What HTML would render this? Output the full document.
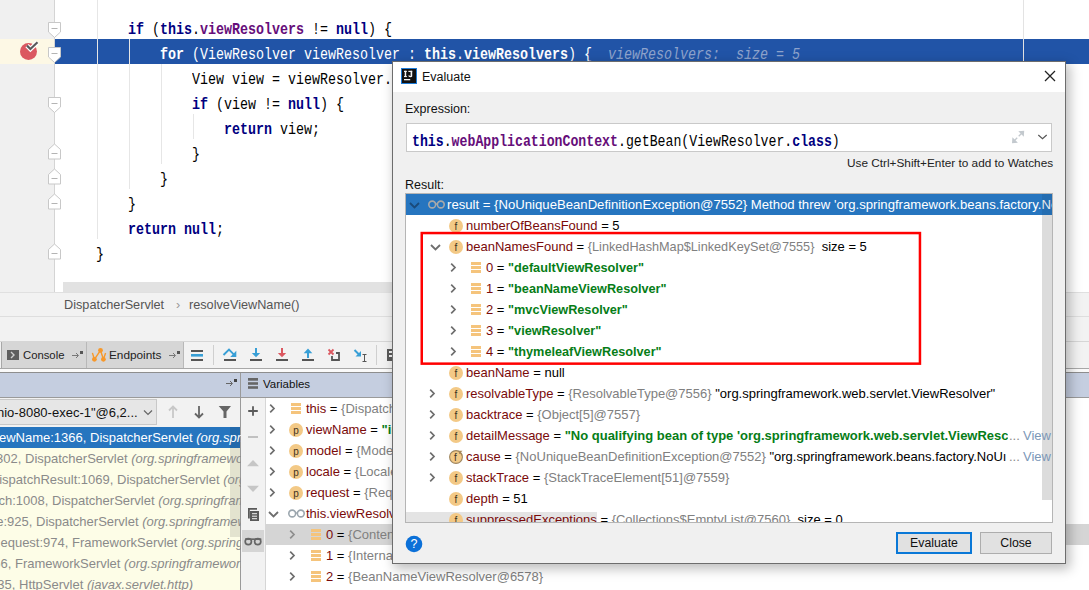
<!DOCTYPE html>
<html><head><meta charset="utf-8">
<style>
*{margin:0;padding:0;box-sizing:border-box}
html,body{width:1089px;height:590px;overflow:hidden;background:#fff;position:relative;font-family:"Liberation Sans",sans-serif}
.a{position:absolute}
.code{font-family:"Liberation Mono",monospace;font-size:16px;transform:scaleX(0.8333);transform-origin:0 0;white-space:pre;position:absolute;line-height:25px;height:25px;color:#000}
.kw{color:#000080;font-weight:bold}
.fld{color:#660e7a;font-weight:bold}
.ui{font-size:13px;white-space:pre;position:absolute;line-height:21px}
.row{position:absolute;height:21px;line-height:21px;white-space:pre;font-size:13px}
.nm{color:#7a0a0a}
.gr{color:#808080}
.str{color:#067d17;font-weight:bold}
.pre{position:absolute;right:100%;top:0}
</style></head><body>

<!-- ============ EDITOR ============ -->
<div class="a" style="left:0;top:0;width:54px;height:292px;background:#f0f0f0"></div>
<div class="a" style="left:54px;top:0;width:1px;height:292px;background:#d4d4d4"></div>
<!-- breakpoint line gutter -->
<div class="a" style="left:0;top:39px;width:54px;height:25px;background:#fdf8e5"></div>
<!-- exec line -->
<div class="a" style="left:55px;top:39px;width:1034px;height:25px;background:#2154a7"></div>
<!-- indent guides -->
<div class="a" style="left:97px;top:0;width:1px;height:239px;background:#e6e6e6"></div>
<div class="a" style="left:129px;top:39px;width:1px;height:150px;background:#e6e6e6"></div>
<div class="a" style="left:161px;top:64px;width:1px;height:100px;background:#e6e6e6"></div>
<div class="a" style="left:193px;top:114px;width:1px;height:25px;background:#e6e6e6"></div>
<!-- right margin -->
<div class="a" style="left:1023px;top:0;width:1px;height:282px;background:#e3e3e3"></div>

<!-- breakpoint icon -->
<svg class="a" style="left:18px;top:41px;overflow:visible" width="24" height="22" viewBox="0 0 24 22">
  <circle cx="10.5" cy="10.5" r="8.5" fill="#db5860"/>
  <path d="M9 4.6 L12.4 8 L19.5 1.3" fill="none" stroke="#fff" stroke-width="4.5"/>
  <path d="M9 4.6 L12.4 8 L19.5 1.3" fill="none" stroke="#59595b" stroke-width="2.2"/>
</svg>

<!-- fold markers -->
<svg class="a" style="left:47px;top:0" width="16" height="292" viewBox="0 0 16 292">
  <g fill="#fff" stroke="#c8c8c8" stroke-width="1">
    <path d="M1.5 22.5 H13.5 V32 L7.5 37.5 L1.5 32 Z"/>
    <path d="M1.5 47.5 H13.5 V57 L7.5 62.5 L1.5 57 Z"/>
    <path d="M1.5 97.5 H13.5 V107 L7.5 112.5 L1.5 107 Z"/>
    <path d="M7.5 144 L13.5 149.5 V159 H1.5 V149.5 Z"/>
    <path d="M7.5 169 L13.5 174.5 V184 H1.5 V174.5 Z"/>
    <path d="M7.5 194 L13.5 199.5 V209 H1.5 V199.5 Z"/>
    <path d="M7.5 244 L13.5 249.5 V259 H1.5 V249.5 Z"/>
  </g>
  <g stroke="#b4b4b4" stroke-width="1">
    <path d="M4.5 28.5 H10.5 M4.5 53.5 H10.5 M4.5 103.5 H10.5 M4.5 153.5 H10.5 M4.5 178.5 H10.5 M4.5 203.5 H10.5 M4.5 253.5 H10.5"/>
  </g>
</svg>

<!-- code -->
<div class="code" style="left:128px;top:18px"><span class="kw">if</span> (<span class="kw">this</span>.<span class="fld">viewResolvers</span> != <span class="kw">null</span>) {</div>
<div class="code" style="left:160px;top:43px;color:#fff"><b>for</b> (ViewResolver viewResolver : <b>this</b>.<b>viewResolvers</b>) {  <i style="color:#8ea3cc">viewResolvers:  size = 5</i></div>
<div class="code" style="left:192px;top:68px">View view = viewResolver.resolveViewName(viewName, locale);</div>
<div class="code" style="left:192px;top:93px"><span class="kw">if</span> (view != <span class="kw">null</span>) {</div>
<div class="code" style="left:224px;top:118px"><span class="kw">return</span> view;</div>
<div class="code" style="left:192px;top:143px">}</div>
<div class="code" style="left:160px;top:168px">}</div>
<div class="code" style="left:128px;top:193px">}</div>
<div class="code" style="left:128px;top:218px"><span class="kw">return null</span>;</div>
<div class="code" style="left:96px;top:243px">}</div>

<!-- horizontal scrollbar -->
<div class="a" style="left:63px;top:282px;width:990px;height:10px;background:#e2e2e2"></div>

<!-- ============ BREADCRUMB ============ -->
<div class="a" style="left:0;top:292px;width:1089px;height:50px;background:#f2f2f2"></div>
<div class="a" style="left:0;top:292px;width:1089px;height:1px;background:#e0e0e0"></div>
<div class="a" style="left:0;top:316px;width:1089px;height:1px;background:#dedede"></div>
<div class="ui" style="left:64px;top:295px;font-size:12.7px;color:#555">DispatcherServlet</div>
<div class="ui" style="left:176px;top:295px;font-size:12.7px;color:#999">›</div>
<div class="ui" style="left:189px;top:295px;font-size:12.7px;color:#555">resolveViewName()</div>

<!-- ============ DEBUG TOOLBAR ============ -->
<div class="a" style="left:0;top:341px;width:1089px;height:27px;background:#f2f2f2"></div>
<div class="a" style="left:0;top:341px;width:1089px;height:1px;background:#d6d6d6"></div>
<div class="a" style="left:1px;top:342px;width:86px;height:26px;background:#d6d6d6;border-left:1px solid #a8a8a8;border-right:1px solid #b8b8b8"></div>
<div class="a" style="left:87px;top:342px;width:97px;height:26px;background:#d6d6d6;border-right:1px solid #b8b8b8"></div>
<div class="a" style="left:0;top:368px;width:1089px;height:1px;background:#a8a8a8"></div>
<div class="a" style="left:0;top:369px;width:1089px;height:3px;background:#fafafa"></div>
<div class="a" style="left:0;top:372px;width:1089px;height:1px;background:#8e8e8e"></div>
<!-- console icon -->
<svg class="a" style="left:7px;top:350px" width="12" height="10"><rect width="12" height="10" fill="#5e5e5e"/><path d="M4 2 L7 5 L4 8" stroke="#d0d0d0" stroke-width="1.4" fill="none"/></svg>
<div class="ui" style="left:23px;top:345px;font-size:11.3px;color:#222">Console</div>
<svg class="a" style="left:72px;top:349px" width="12" height="10"><path d="M0 6.5 H6 M4 4 L6.5 6.5 L4 9" stroke="#777" stroke-width="1" fill="none"/><rect x="8" y="2" width="3" height="3" fill="#555"/></svg>
<!-- endpoints icon -->
<svg class="a" style="left:90px;top:346px" width="18" height="17" viewBox="90 346 18 17"><path d="M92.4 352.9 L94.4 359.3 L100.5 350.3 L103.4 359.3 L105.6 352.9" stroke="#f7982a" stroke-width="1.4" fill="none"/><circle cx="94.4" cy="359.3" r="2.4" fill="#f7982a"/><circle cx="100.5" cy="350.3" r="2.4" fill="#f7982a"/><circle cx="103.4" cy="359.3" r="2.4" fill="#f7982a"/></svg>
<div class="ui" style="left:109px;top:345px;font-size:11.8px;color:#222">Endpoints</div>
<svg class="a" style="left:169px;top:349px" width="12" height="10"><path d="M0 6.5 H6 M4 4 L6.5 6.5 L4 9" stroke="#777" stroke-width="1" fill="none"/><rect x="8" y="2" width="3" height="3" fill="#555"/></svg>
<!-- toolbar buttons -->
<svg class="a" style="left:0;top:341px" width="392" height="27" viewBox="0 341 392 27">
  <rect x="191" y="350" width="12" height="2" fill="#555"/><rect x="191" y="354" width="12" height="2.6" fill="#389fd6"/><rect x="191" y="359" width="12" height="2" fill="#555"/>
  <rect x="213" y="345" width="1" height="20" fill="#cfcfcf"/>
  <path d="M223.5 355 L229 349.6 L234 354.6" stroke="#389fd6" stroke-width="1.9" fill="none"/><path d="M236.3 350.8 V357 H230.2 Z" fill="#389fd6"/><rect x="224" y="359" width="12" height="2" fill="#555"/>
  <rect x="255" y="348" width="2" height="6" fill="#389fd6"/><path d="M251.8 353 H260.2 L256 357.3 Z" fill="#389fd6"/><rect x="250" y="359" width="12" height="2" fill="#555"/>
  <rect x="281" y="348" width="2" height="6" fill="#db5860"/><path d="M277.8 353 H286.2 L282 357.3 Z" fill="#db5860"/><rect x="276" y="359" width="12" height="2" fill="#555"/>
  <rect x="307" y="352" width="2" height="6" fill="#389fd6"/><path d="M303.7 353.2 H312.3 L308 348.6 Z" fill="#389fd6"/><rect x="302" y="359" width="12" height="2" fill="#555"/>
  <path d="M328.5 349.5 L333.5 354.5 M333.5 349.5 L328.5 354.5" stroke="#db5860" stroke-width="1.8"/>
  <path d="M336 353 H339 V360 H332 V356" stroke="#555" stroke-width="1.8" fill="none"/>
  <path d="M354.5 350 L359.5 355" stroke="#389fd6" stroke-width="1.9"/><path d="M361 351 V356.5 H355.5 Z" fill="#389fd6"/>
  <path d="M364.5 354.5 V361.5 M362.5 354.5 H366.5 M362.5 361.5 H366.5" stroke="#555" stroke-width="1"/>
  <rect x="376" y="345" width="1" height="20" fill="#cfcfcf"/>
  <rect x="387" y="349" width="6" height="12" fill="#5a5a5a"/><rect x="389" y="351" width="4" height="2" fill="#f2f2f2"/><rect x="389" y="355" width="4" height="2" fill="#f2f2f2"/>
</svg>

<!-- ============ HEADER ROW ============ -->
<div class="a" style="left:0;top:373px;width:1089px;height:24px;background:#c5cee0"></div>
<div class="a" style="left:0;top:397px;width:1089px;height:1px;background:#9a9a9a"></div>
<div class="a" style="left:240px;top:373px;width:1px;height:217px;background:#9a9a9a"></div>
<svg class="a" style="left:226px;top:377px" width="12" height="10"><path d="M0 6.5 H6 M4 4 L6.5 6.5 L4 9" stroke="#666" stroke-width="1" fill="none"/><rect x="8" y="2" width="3" height="3" fill="#444"/></svg>
<svg class="a" style="left:248px;top:378px" width="10" height="11"><rect x="0" y="0" width="10" height="2.7" fill="#666"/><rect x="0" y="4.2" width="10" height="2.6" fill="#666"/><rect x="0" y="8.2" width="10" height="2.6" fill="#666"/></svg>
<div class="ui" style="left:263px;top:374px;font-size:11.5px;color:#111">Variables</div>

<!-- ============ FRAMES PANEL ============ -->
<div class="a" style="left:0;top:398px;width:240px;height:29px;background:#f2f2f2"></div>
<div class="a" style="left:-2px;top:399px;width:159px;height:26px;background:#e6e6e6;border:1px solid #c8c8c8"></div>
<div class="ui" style="left:-3px;top:402px;font-size:13px;color:#111">nio-8080-exec-1"@6,2...</div>
<svg class="a" style="left:143px;top:409px" width="10" height="8"><path d="M1 1.5 L5 5.5 L9 1.5" stroke="#666" stroke-width="1.2" fill="none"/></svg>
<svg class="a" style="left:168px;top:402px" width="70" height="20" viewBox="0 0 70 20">
  <path d="M5 16 V4.5 M1 8.5 L5 4.5 L9 8.5" stroke="#c8c8c8" stroke-width="1.8" fill="none"/>
  <path d="M31 4 V15.5 M27 11.5 L31 15.5 L35 11.5" stroke="#666" stroke-width="1.8" fill="none"/>
  <path d="M50.7 4 H63 L58.5 9.5 V16 H55.5 V9.5 Z" fill="#666"/>
</svg>
<div class="a" style="left:0;top:427px;width:240px;height:163px;background:#fdfde7"></div>
<div class="a" style="left:0;top:427px;width:240px;height:21px;background:#2675bf"></div>
<div class="a" style="left:230px;top:427px;width:10px;height:110px;background:rgba(0,0,0,0.1)"></div>
<div class="row" style="left:90px;top:427px;color:#fff"><span class="pre">resolveViewName:1366, </span>DispatcherServlet <i>(org.springframework.web.servlet)</i></div>
<div class="row" style="left:25px;top:448px;color:#8a8a8a"><span class="pre">render:1302, </span>DispatcherServlet <i>(org.springframework.web.servlet)</i></div>
<div class="row" style="left:117px;top:469px;color:#8a8a8a"><span class="pre">processDispatchResult:1069, </span>DispatcherServlet <i>(org.springframework.web.servlet)</i></div>
<div class="row" style="left:52px;top:490px;color:#8a8a8a"><span class="pre">doDispatch:1008, </span>DispatcherServlet <i>(org.springframework.web.servlet)</i></div>
<div class="row" style="left:36px;top:511px;color:#8a8a8a"><span class="pre">doService:925, </span>DispatcherServlet <i>(org.springframework.web.servlet)</i></div>
<div class="row" style="left:72px;top:532px;color:#8a8a8a"><span class="pre">processRequest:974, </span>FrameworkServlet <i>(org.springframework.web.servlet)</i></div>
<div class="row" style="left:15px;top:553px;color:#8a8a8a"><span class="pre">doGet:866, </span>FrameworkServlet <i>(org.springframework.web.servlet)</i></div>
<div class="row" style="left:19px;top:574px;color:#8a8a8a"><span class="pre">service:635, </span>HttpServlet <i>(javax.servlet.http)</i></div>
<div class="a" style="left:230px;top:427px;width:10px;height:163px;background:transparent"></div>

<!-- ============ VARIABLES PANEL ============ -->
<div class="a" style="left:241px;top:398px;width:24px;height:192px;background:#f2f2f2"></div>
<div class="a" style="left:265px;top:398px;width:1px;height:192px;background:#d6d6d6"></div>
<div class="a" style="left:266px;top:398px;width:823px;height:192px;background:#fff"></div>
<svg class="a" style="left:241px;top:398px" width="24" height="192" viewBox="0 0 24 192">
  <path d="M12 8.3 V17.8 M7.2 13 H16.8" stroke="#5a5a5a" stroke-width="1.8"/>
  <path d="M7 39 H17" stroke="#bbb" stroke-width="1.8"/>
  <path d="M6 68.2 H18 L12 62 Z" fill="#c6c6c6"/>
  <path d="M6 87.8 H18 L12 94 Z" fill="#c6c6c6"/>
  <path d="M7.9 120.5 V110.9 H16" stroke="#5a5a5a" stroke-width="1.8" fill="none"/>
  <rect x="9" y="113" width="9" height="10" fill="#5a5a5a"/><path d="M11 115.7 H16 M11 118.2 H16 M11 120.7 H16" stroke="#f2f2f2" stroke-width="1"/>
  <rect x="1" y="132" width="22" height="22" fill="#d5d5d5"/>
  <g fill="none" stroke="#666" stroke-width="1.7"><circle cx="7.3" cy="143.6" r="3.1"/><circle cx="16.7" cy="143.6" r="3.1"/><path d="M4 141.2 H20.3"/></g>
</svg>
<div class="a" style="left:266px;top:524px;width:823px;height:21px;background:#d5d5d5"></div>
<svg class="a" style="left:269px;top:403px" width="8" height="11"><path d="M1.2 1.6 L5 5.5 L1.2 9.4" stroke="#6e6e6e" stroke-width="1.7" fill="none"/></svg>
<svg class="a" style="left:291px;top:403px" width="10" height="11"><rect y="0" width="10" height="3" fill="#f5c47c"/><rect y="4" width="10" height="3" fill="#f5c47c"/><rect y="8" width="10" height="3" fill="#f5c47c"/></svg>
<div class="row" style="left:306px;top:398px"><span class="nm">this</span> = <span class="gr">{DispatcherServlet@6420}</span></div>
<svg class="a" style="left:269px;top:424px" width="8" height="11"><path d="M1.2 1.6 L5 5.5 L1.2 9.4" stroke="#6e6e6e" stroke-width="1.7" fill="none"/></svg>
<svg class="a" style="left:289px;top:423px" width="14" height="14"><circle cx="7" cy="7" r="7" fill="#f3c986"/><text x="7" y="11" font-family="Liberation Sans" font-size="10" text-anchor="middle" fill="#3d3321">p</text></svg>
<div class="row" style="left:306px;top:419px"><span class="nm">viewName</span> = <span class="str">"index"</span></div>
<svg class="a" style="left:269px;top:445px" width="8" height="11"><path d="M1.2 1.6 L5 5.5 L1.2 9.4" stroke="#6e6e6e" stroke-width="1.7" fill="none"/></svg>
<svg class="a" style="left:289px;top:444px" width="14" height="14"><circle cx="7" cy="7" r="7" fill="#f3c986"/><text x="7" y="11" font-family="Liberation Sans" font-size="10" text-anchor="middle" fill="#3d3321">p</text></svg>
<div class="row" style="left:306px;top:440px"><span class="nm">model</span> = <span class="gr">{ModelMap@6421}</span></div>
<svg class="a" style="left:269px;top:466px" width="8" height="11"><path d="M1.2 1.6 L5 5.5 L1.2 9.4" stroke="#6e6e6e" stroke-width="1.7" fill="none"/></svg>
<svg class="a" style="left:289px;top:465px" width="14" height="14"><circle cx="7" cy="7" r="7" fill="#f3c986"/><text x="7" y="11" font-family="Liberation Sans" font-size="10" text-anchor="middle" fill="#3d3321">p</text></svg>
<div class="row" style="left:306px;top:461px"><span class="nm">locale</span> = <span class="gr">{Locale@6422}</span></div>
<svg class="a" style="left:269px;top:487px" width="8" height="11"><path d="M1.2 1.6 L5 5.5 L1.2 9.4" stroke="#6e6e6e" stroke-width="1.7" fill="none"/></svg>
<svg class="a" style="left:289px;top:486px" width="14" height="14"><circle cx="7" cy="7" r="7" fill="#f3c986"/><text x="7" y="11" font-family="Liberation Sans" font-size="10" text-anchor="middle" fill="#3d3321">p</text></svg>
<div class="row" style="left:306px;top:482px"><span class="nm">request</span> = <span class="gr">{RequestFacade@6423}</span></div>
<svg class="a" style="left:268px;top:511px" width="11" height="7"><path d="M1 1 L5.5 5.5 L10 1" stroke="#6e6e6e" stroke-width="1.8" fill="none"/></svg>
<svg class="a" style="left:288px;top:509px" width="17" height="9"><circle cx="4.2" cy="4.5" r="3.4" fill="none" stroke="#9ba6ae" stroke-width="1.6"/><circle cx="12.8" cy="4.5" r="3.4" fill="none" stroke="#9ba6ae" stroke-width="1.6"/><path d="M7.6 4 H9.4" stroke="#9ba6ae" stroke-width="1.4"/></svg>
<div class="row" style="left:306px;top:503px"><span class="nm">this.viewResolvers</span> = <span class="gr">{ArrayList@6424}</span></div>
<svg class="a" style="left:289px;top:529px" width="8" height="11"><path d="M1.2 1.6 L5 5.5 L1.2 9.4" stroke="#8e8e8e" stroke-width="1.7" fill="none"/></svg>
<svg class="a" style="left:311px;top:529px" width="10" height="11"><rect y="0" width="10" height="3" fill="#f5c47c"/><rect y="4" width="10" height="3" fill="#f5c47c"/><rect y="8" width="10" height="3" fill="#f5c47c"/></svg>
<div class="row" style="left:326px;top:524px"><span class="nm">0</span> = <span class="gr">{ContentNegotiatingViewResolver@6576}</span></div>
<svg class="a" style="left:289px;top:550px" width="8" height="11"><path d="M1.2 1.6 L5 5.5 L1.2 9.4" stroke="#6e6e6e" stroke-width="1.7" fill="none"/></svg>
<svg class="a" style="left:311px;top:550px" width="10" height="11"><rect y="0" width="10" height="3" fill="#f5c47c"/><rect y="4" width="10" height="3" fill="#f5c47c"/><rect y="8" width="10" height="3" fill="#f5c47c"/></svg>
<div class="row" style="left:326px;top:545px"><span class="nm">1</span> = <span class="gr">{InternalResourceViewResolver@6577}</span></div>
<svg class="a" style="left:289px;top:571px" width="8" height="11"><path d="M1.2 1.6 L5 5.5 L1.2 9.4" stroke="#6e6e6e" stroke-width="1.7" fill="none"/></svg>
<svg class="a" style="left:311px;top:571px" width="10" height="11"><rect y="0" width="10" height="3" fill="#f5c47c"/><rect y="4" width="10" height="3" fill="#f5c47c"/><rect y="8" width="10" height="3" fill="#f5c47c"/></svg>
<div class="row" style="left:326px;top:566px"><span class="nm">2</span> = <span class="gr">{BeanNameViewResolver@6578}</span></div>


<!-- ============ EVALUATE DIALOG ============ -->
<div class="a" style="left:392px;top:61px;width:674px;height:503px;box-shadow:3px 4px 11px 1px rgba(0,0,0,0.26)"></div>
<div class="a" style="left:392px;top:61px;width:674px;height:503px;background:#f0f0f0;border:1px solid #6d6d6d"></div>
<div class="a" style="left:393px;top:62px;width:672px;height:30px;background:#fff"></div>
<svg class="a" style="left:401px;top:68px" width="16" height="16"><rect x="0" y="0" width="16" height="16" fill="#1e7bd6"/><rect x="1" y="1" width="14" height="14" fill="#111"/><g fill="#f4f4f4"><rect x="3" y="2.8" width="2.8" height="1.2"/><rect x="3.7" y="2.8" width="1.5" height="6.2"/><rect x="3" y="8" width="2.8" height="1.1"/><rect x="7.4" y="2.8" width="3.8" height="1.2"/><rect x="9.6" y="2.8" width="1.6" height="5.6"/><path d="M7.2 7.6 H8.7 Q8.8 8.1 9.6 8 L11.2 8 Q11 9.2 9.4 9.2 Q7.4 9.2 7.2 7.6 Z"/><rect x="3" y="11" width="6.2" height="1.3"/></g></svg>
<div class="ui" style="left:422px;top:67px;font-size:12.5px;color:#111">Evaluate</div>
<svg class="a" style="left:1044px;top:70px" width="12" height="12"><path d="M1 1 L11 11 M11 1 L1 11" stroke="#222" stroke-width="1.25"/></svg>

<div class="ui" style="left:405px;top:99px;font-size:12.5px;color:#111">Expression:</div>
<div class="a" style="left:406px;top:123px;width:646px;height:29px;background:#fff;border:1px solid #c9c9c9"></div>
<div class="code" style="left:412px;top:130px;font-size:16px;transform:scaleX(0.825)"><span class="kw">this</span>.<span class="fld">webApplicationContext</span>.getBean(ViewResolver.<span class="kw">class</span>)</div>
<svg class="a" style="left:1010px;top:130px" width="16" height="15" viewBox="1010 130 16 15"><path d="M1024.2 130.8 L1018.3 131.2 L1023.8 136.7 Z M1012 143.2 L1012.4 137.3 L1017.9 142.8 Z" fill="#c3c9ce"/><path d="M1021.5 133.5 L1018.7 136.3 M1014.5 140.5 L1017.2 137.8" stroke="#c3c9ce" stroke-width="1.3"/></svg>
<svg class="a" style="left:1037px;top:134px" width="11" height="7"><path d="M1.3 1 L5.5 4.6 L9.7 1" stroke="#555" stroke-width="1.2" fill="none"/></svg>
<div class="ui" style="left:847px;top:153px;font-size:11.8px;color:#222">Use Ctrl+Shift+Enter to add to Watches</div>

<div class="ui" style="left:405px;top:175px;font-size:12.5px;color:#111">Result:</div>
<div class="a" style="left:405px;top:193px;width:648px;height:330px;background:#fff;border:1px solid #b5b5b5;overflow:hidden" id="tree">
<div class="a" style="left:636px;top:21px;width:10px;height:285px;background:#dcdcdc"></div>
<div class="a" style="left:0;top:0;width:646px;height:21px;background:#2675bf"></div>
<svg class="a" style="left:3px;top:8px" width="11" height="7"><path d="M1 1 L5.5 5.5 L10 1" stroke="#1a4a7a" stroke-width="1.8" fill="none"/></svg>
<svg class="a" style="left:22px;top:6px" width="17" height="9"><circle cx="4.2" cy="4.5" r="3.4" fill="none" stroke="#a9a9a9" stroke-width="1.6"/><circle cx="12.8" cy="4.5" r="3.4" fill="none" stroke="#a9a9a9" stroke-width="1.6"/><path d="M7.6 4 H9.4" stroke="#a9a9a9" stroke-width="1.4"/></svg>
<div class="row" style="left:41px;top:0;color:#fff;font-size:13.15px">result = {NoUniqueBeanDefinitionException@7552} Method threw 'org.springframework.beans.factory.NoUniqueBeanDefinitionException' exception.</div>
<div class="a" style="left:636px;top:0;width:10px;height:21px;background:rgba(20,40,60,0.10)"></div>
<div class="a" style="left:0;top:318px;width:191px;height:18px;background:#e4e4e4"></div>
<svg class="a" style="left:43px;top:25px" width="14" height="14"><circle cx="7" cy="7" r="7" fill="#f3c986"/><text x="7" y="11" font-family="Liberation Sans" font-size="10" text-anchor="middle" fill="#3d3321">f</text></svg>
<div class="row" style="left:60px;top:21px"><span class="nm">numberOfBeansFound</span> = 5</div>
<svg class="a" style="left:24px;top:50px" width="11" height="7"><path d="M1 1 L5.5 5.5 L10 1" stroke="#6e6e6e" stroke-width="1.8" fill="none"/></svg>
<svg class="a" style="left:43px;top:46px" width="14" height="14"><circle cx="7" cy="7" r="7" fill="#f3c986"/><text x="7" y="11" font-family="Liberation Sans" font-size="10" text-anchor="middle" fill="#3d3321">f</text></svg>
<div class="row" style="left:60px;top:42px"><span class="nm">beanNamesFound</span> = <span class="gr" style="font-size:12.7px">{LinkedHashMap$LinkedKeySet@7555}</span>  size = 5</div>
<svg class="a" style="left:43px;top:172px" width="14" height="14"><circle cx="7" cy="7" r="7" fill="#f3c986"/><text x="7" y="11" font-family="Liberation Sans" font-size="10" text-anchor="middle" fill="#3d3321">f</text></svg>
<div class="row" style="left:60px;top:168px"><span class="nm">beanName</span> = null</div>
<svg class="a" style="left:23px;top:194px" width="8" height="11"><path d="M1.2 1.6 L5 5.5 L1.2 9.4" stroke="#6e6e6e" stroke-width="1.7" fill="none"/></svg>
<svg class="a" style="left:43px;top:193px" width="14" height="14"><circle cx="7" cy="7" r="7" fill="#f3c986"/><text x="7" y="11" font-family="Liberation Sans" font-size="10" text-anchor="middle" fill="#3d3321">f</text></svg>
<div class="row" style="left:60px;top:189px"><span class="nm">resolvableType</span> = <span class="gr">{ResolvableType@7556}</span> "org.springframework.web.servlet.ViewResolver"</div>
<svg class="a" style="left:23px;top:215px" width="8" height="11"><path d="M1.2 1.6 L5 5.5 L1.2 9.4" stroke="#6e6e6e" stroke-width="1.7" fill="none"/></svg>
<svg class="a" style="left:43px;top:214px" width="14" height="14"><circle cx="7" cy="7" r="7" fill="#f3c986"/><text x="7" y="11" font-family="Liberation Sans" font-size="10" text-anchor="middle" fill="#3d3321">f</text></svg>
<div class="row" style="left:60px;top:210px"><span class="nm">backtrace</span> = <span class="gr">{Object[5]@7557}</span></div>
<svg class="a" style="left:23px;top:236px" width="8" height="11"><path d="M1.2 1.6 L5 5.5 L1.2 9.4" stroke="#6e6e6e" stroke-width="1.7" fill="none"/></svg>
<svg class="a" style="left:43px;top:235px" width="14" height="14"><circle cx="7" cy="7" r="7" fill="#f3c986"/><text x="7" y="11" font-family="Liberation Sans" font-size="10" text-anchor="middle" fill="#3d3321">f</text></svg>
<div class="row" style="left:60px;top:231px"><span class="nm">detailMessage</span> = <span class="str">"No qualifying bean of type 'org.springframework.web.servlet.ViewResc</span></div>
<svg class="a" style="left:23px;top:257px" width="8" height="11"><path d="M1.2 1.6 L5 5.5 L1.2 9.4" stroke="#6e6e6e" stroke-width="1.7" fill="none"/></svg>
<svg class="a" style="left:43px;top:256px;overflow:visible" width="14" height="14"><circle cx="7" cy="7" r="6.4" fill="#f3c986" stroke="#9e8660" stroke-width="1.1"/><text x="6.5" y="11" font-family="Liberation Sans" font-size="10" text-anchor="middle" fill="#3d3321">f</text><path d="M10 3 Q12.5 3 13 5.5" stroke="#a8895a" stroke-width="1.2" fill="none"/><path d="M9.5 0.8 L13.5 0.8 L10.2 4 Z" fill="#a8895a"/></svg>
<div class="row" style="left:60px;top:252px"><span class="nm">cause</span> = <span class="gr">{NoUniqueBeanDefinitionException@7552}</span> "org.springframework.beans.factory.NoUı</div>
<svg class="a" style="left:23px;top:278px" width="8" height="11"><path d="M1.2 1.6 L5 5.5 L1.2 9.4" stroke="#6e6e6e" stroke-width="1.7" fill="none"/></svg>
<svg class="a" style="left:43px;top:277px" width="14" height="14"><circle cx="7" cy="7" r="7" fill="#f3c986"/><text x="7" y="11" font-family="Liberation Sans" font-size="10" text-anchor="middle" fill="#3d3321">f</text></svg>
<div class="row" style="left:60px;top:273px"><span class="nm">stackTrace</span> = <span class="gr">{StackTraceElement[51]@7559}</span></div>
<svg class="a" style="left:43px;top:298px" width="14" height="14"><circle cx="7" cy="7" r="7" fill="#f3c986"/><text x="7" y="11" font-family="Liberation Sans" font-size="10" text-anchor="middle" fill="#3d3321">f</text></svg>
<div class="row" style="left:60px;top:294px"><span class="nm">depth</span> = 51</div>
<svg class="a" style="left:43px;top:319px" width="14" height="14"><circle cx="7" cy="7" r="7" fill="#f3c986"/><text x="7" y="11" font-family="Liberation Sans" font-size="10" text-anchor="middle" fill="#3d3321">f</text></svg>
<div class="row" style="left:60px;top:315px"><span class="nm">suppressedExceptions</span> = <span class="gr">{Collections$EmptyList@7560}</span>  size = 0</div>
<svg class="a" style="left:44px;top:68px" width="8" height="11"><path d="M1.2 1.6 L5 5.5 L1.2 9.4" stroke="#6e6e6e" stroke-width="1.7" fill="none"/></svg>
<svg class="a" style="left:65px;top:68px" width="10" height="11"><rect y="0" width="10" height="3" fill="#f5c47c"/><rect y="4" width="10" height="3" fill="#f5c47c"/><rect y="8" width="10" height="3" fill="#f5c47c"/></svg>
<div class="row" style="left:80px;top:63px"><span class="nm">0</span> = <span class="str" style="font-size:12.7px">"defaultViewResolver"</span></div>
<svg class="a" style="left:44px;top:89px" width="8" height="11"><path d="M1.2 1.6 L5 5.5 L1.2 9.4" stroke="#6e6e6e" stroke-width="1.7" fill="none"/></svg>
<svg class="a" style="left:65px;top:89px" width="10" height="11"><rect y="0" width="10" height="3" fill="#f5c47c"/><rect y="4" width="10" height="3" fill="#f5c47c"/><rect y="8" width="10" height="3" fill="#f5c47c"/></svg>
<div class="row" style="left:80px;top:84px"><span class="nm">1</span> = <span class="str" style="font-size:12.7px">"beanNameViewResolver"</span></div>
<svg class="a" style="left:44px;top:110px" width="8" height="11"><path d="M1.2 1.6 L5 5.5 L1.2 9.4" stroke="#6e6e6e" stroke-width="1.7" fill="none"/></svg>
<svg class="a" style="left:65px;top:110px" width="10" height="11"><rect y="0" width="10" height="3" fill="#f5c47c"/><rect y="4" width="10" height="3" fill="#f5c47c"/><rect y="8" width="10" height="3" fill="#f5c47c"/></svg>
<div class="row" style="left:80px;top:105px"><span class="nm">2</span> = <span class="str" style="font-size:12.7px">"mvcViewResolver"</span></div>
<svg class="a" style="left:44px;top:131px" width="8" height="11"><path d="M1.2 1.6 L5 5.5 L1.2 9.4" stroke="#6e6e6e" stroke-width="1.7" fill="none"/></svg>
<svg class="a" style="left:65px;top:131px" width="10" height="11"><rect y="0" width="10" height="3" fill="#f5c47c"/><rect y="4" width="10" height="3" fill="#f5c47c"/><rect y="8" width="10" height="3" fill="#f5c47c"/></svg>
<div class="row" style="left:80px;top:126px"><span class="nm">3</span> = <span class="str" style="font-size:12.7px">"viewResolver"</span></div>
<svg class="a" style="left:44px;top:152px" width="8" height="11"><path d="M1.2 1.6 L5 5.5 L1.2 9.4" stroke="#6e6e6e" stroke-width="1.7" fill="none"/></svg>
<svg class="a" style="left:65px;top:152px" width="10" height="11"><rect y="0" width="10" height="3" fill="#f5c47c"/><rect y="4" width="10" height="3" fill="#f5c47c"/><rect y="8" width="10" height="3" fill="#f5c47c"/></svg>
<div class="row" style="left:80px;top:147px"><span class="nm">4</span> = <span class="str" style="font-size:12.7px">"thymeleafViewResolver"</span></div>
<div class="a" style="left:602px;top:231px;width:34px;height:21px;background:#fff"></div><div class="a" style="left:636px;top:231px;width:10px;height:21px;background:#dcdcdc"></div>
<div class="row" style="left:603px;top:231px;color:#8a8a8a">...</div><div class="row" style="left:617px;top:231px;color:#7c98b8">View</div>
<div class="a" style="left:602px;top:252px;width:34px;height:21px;background:#fff"></div><div class="a" style="left:636px;top:252px;width:10px;height:21px;background:#dcdcdc"></div>
<div class="row" style="left:603px;top:252px;color:#8a8a8a">...</div><div class="row" style="left:617px;top:252px;color:#7c98b8">View</div>
</div>


<svg class="a" style="left:419px;top:230px" width="505" height="138"><rect x="2.75" y="3.05" width="498.2" height="130.6" fill="none" stroke="#ff0000" stroke-width="2.5"/></svg>
<svg class="a" style="left:405px;top:535px" width="18" height="18"><circle cx="9" cy="9" r="8.3" fill="#0b70d8"/><text x="9" y="13.2" font-family="Liberation Sans" font-size="12.5" text-anchor="middle" fill="#fff">?</text></svg>
<div class="a" style="left:896px;top:532px;width:76px;height:22px;background:#e1e1e1;border:2px solid #0a78d7"></div>
<div class="ui" style="left:896px;top:532px;width:76px;text-align:center;font-size:12.3px;color:#111;line-height:22px">Evaluate</div>
<div class="a" style="left:980px;top:532px;width:72px;height:22px;background:#e1e1e1;border:1px solid #adadad"></div>
<div class="ui" style="left:980px;top:532px;width:72px;text-align:center;font-size:12.3px;color:#111;line-height:22px">Close</div>

</body></html>
